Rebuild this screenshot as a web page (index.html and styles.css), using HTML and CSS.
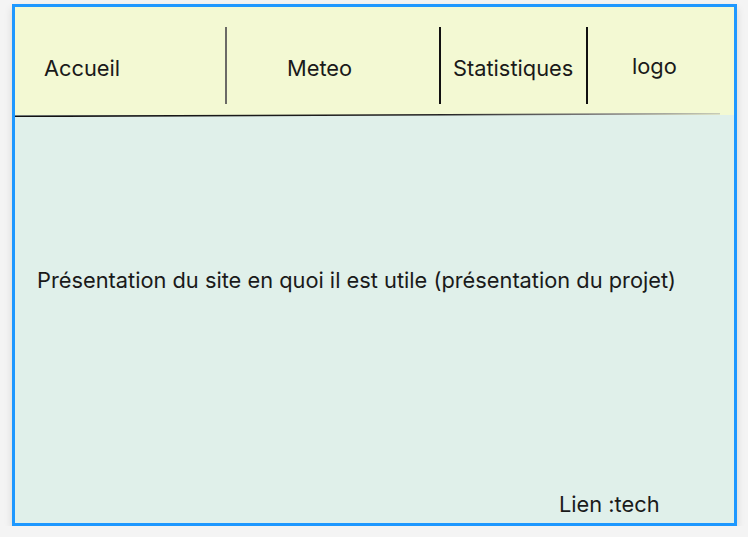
FILE: index.html
```html
<!DOCTYPE html>
<html lang="fr">
<head>
<meta charset="utf-8">
<link rel="stylesheet" href="styles.css">
</head>
<body>
<div class="frame">
  <header class="header">
    <div class="cell c1">Accueil</div>
    <div class="divider gray"></div>
    <div class="cell c2">Meteo</div>
    <div class="divider"></div>
    <div class="cell c3">Statistiques</div>
    <div class="divider"></div>
    <div class="cell c4">logo</div>
  </header>
  <svg class="rule" width="722" height="4" viewBox="0 0 722 4">
    <defs>
      <linearGradient id="g" x1="0" x2="1" y1="0" y2="0">
        <stop offset="0" stop-color="#111"/>
        <stop offset="0.6" stop-color="#222"/>
        <stop offset="0.85" stop-color="#888"/>
        <stop offset="1" stop-color="#c8ccb8"/>
      </linearGradient>
    </defs>
    <path d="M0 3.4 L705 0.6" stroke="url(#g)" stroke-width="1.6" fill="none"/>
  </svg>
  <main class="content">
    <p class="intro">Présentation du site en quoi il est utile (présentation du projet)</p>
    <p class="link">Lien :tech</p>
  </main>
</div>
</body>
</html>
```
FILE: styles.css
```css
html, body {
  margin: 0;
  padding: 0;
  background: #f4f4f4;
  font-family: Inter, "Noto Sans", sans-serif;
  color: #1a1a1a;
}
.frame {
  margin: 4px 0 0 12px;
  width: 725px;
  height: 522px;
  box-sizing: border-box;
  border: 3px solid #1e98ff;
  background: #e0f0ea;
  box-shadow: 0 4px 8px rgba(0, 0, 0, 0.12);
  display: flex;
  flex-direction: column;
}
.header {
  height: 108px;
  box-sizing: border-box;
  padding-top: 20px;
  background: #f3f9d3;
  display: flex;
  align-items: flex-start;
  font-size: 21.8px;
  flex-shrink: 0;
}
.cell {
  box-sizing: border-box;
  line-height: 26px;
  margin-top: 28px;
}
.c1 { width: 210px; padding-left: 29px; }
.c2 { width: 212px; padding-left: 60px; }
.c3 { width: 145px; padding-left: 12px; }
.c4 { padding-left: 44px; margin-top: 26px; }
.divider {
  width: 2px;
  height: 77px;
  background: #111;
}
.divider.gray { background: #6b6b66; }
.rule {
  display: block;
  margin-top: -2px;
  flex-shrink: 0;
}
.content {
  flex: 1;
  display: flex;
  flex-direction: column;
  font-size: 21.8px;
}
.intro {
  margin: 150px 0 0 22px;
  line-height: 26px;
}
.link {
  margin: auto 0 6px 544px;
  line-height: 26px;
}
```
